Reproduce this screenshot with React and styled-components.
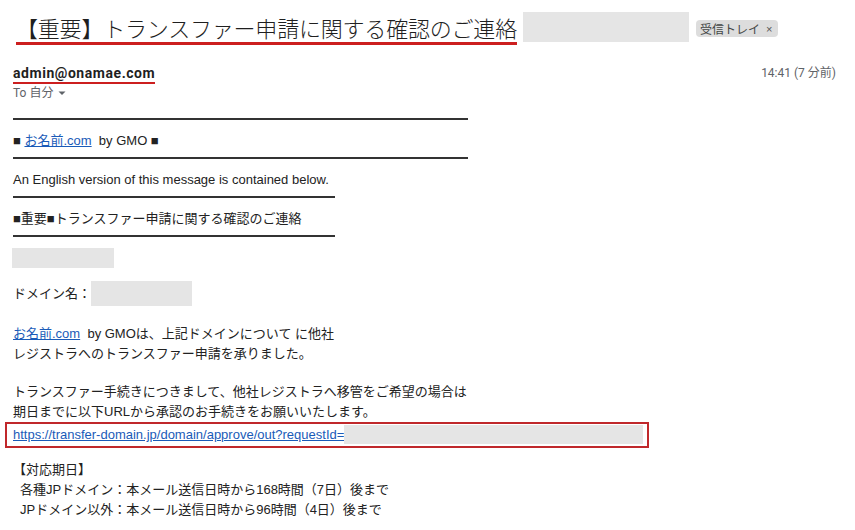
import styled, { createGlobalStyle } from "styled-components"

const GlobalStyle = createGlobalStyle`
  html, body {
    margin: 0;
    padding: 0;
    background: #ffffff;
  }
  body {
    font-family: "Liberation Sans", "Noto Sans CJK JP", sans-serif;
    color: #222222;
  }
`

const StyledPage = styled('div')`
  width: 855px;
  height: 530px;
  overflow: hidden;
  box-sizing: border-box;
  padding: 12px 19px 0 13px;
`

const StyledSubjectRow = styled('div')`
  display: flex;
  flex-direction: row;
  align-items: flex-start;
`

const StyledSubject = styled('h1')`
  margin: 0 0 0 3px;
  font-family: "Noto Sans CJK JP", "Noto Sans", sans-serif;
  font-size: 22px;
  font-weight: 300;
  line-height: 30px;
  letter-spacing: -0.2px;
  color: #1f1f1f;
  white-space: nowrap;
  border-bottom: 3px solid #cc1f1f;
`

const StyledMask = styled('div')`
  width: ${props => props.width};
  height: ${props => props.height};
  flex: ${props => props.flex || 'none'};
  margin-left: ${props => props.marginLeft || '0'};
  background-color: #e5e5e5;
`

const StyledLabel = styled('span')`
  display: inline-flex;
  align-items: center;
  gap: 6px;
  height: 17px;
  margin-left: 7px;
  margin-top: 8px;
  padding: 0 6px 0 4px;
  font-family: "Noto Sans CJK JP", sans-serif;
  font-size: 12px;
  color: #444746;
  background-color: #dddddd;
  border-radius: 4px;
`

const StyledClose = styled('span')`
  font-family: "Liberation Sans", sans-serif;
  font-size: 11px;
  color: #555;
`

const StyledSenderRow = styled('div')`
  display: flex;
  justify-content: space-between;
  align-items: flex-start;
  margin-top: 19px;
`

const StyledSenderCol = styled('div')`
  display: flex;
  flex-direction: column;
  align-items: flex-start;
`

const StyledSender = styled('span')`
  font-family: Roboto, "Liberation Sans", sans-serif;
  font-size: 14px;
  font-weight: 700;
  line-height: 18px;
  letter-spacing: 0.55px;
  color: #1f1f1f;
  border-bottom: 2px solid #cc1f1f;
`

const StyledTo = styled('span')`
  display: flex;
  align-items: center;
  gap: 4px;
  margin-top: 2px;
  font-family: Roboto, "Noto Sans CJK JP", sans-serif;
  font-size: 12px;
  line-height: 14px;
  color: #5f6368;
`

const StyledTime = styled('span')`
  font-family: Roboto, "Noto Sans CJK JP", sans-serif;
  font-size: 12px;
  line-height: 18px;
  color: #5f6368;
`

const StyledBody = styled('div')`
  padding-top: 12px;
  font-size: 13px;
  line-height: 20px;
  color: #222222;
`

const StyledRule = styled('div')`
  width: ${props => props.width};
  height: 2px;
  margin-top: 6px;
  margin-bottom: 11px;
  background-color: #333333;
`

const StyledLine = styled('div')`
  display: flex;
  align-items: center;
  white-space: pre;
  padding-left: ${props => props.indent || '0'};
`

const StyledGap = styled('div')`
  height: ${props => props.height};
`

const StyledLink = styled('a')`
  color: #1a5bb8;
  text-decoration: underline;
`

const StyledUrlBox = styled('div')`
  display: flex;
  align-items: center;
  width: 644px;
  box-sizing: border-box;
  margin-left: -8px;
  padding: 1px 4px 2px 6px;
  border: 2px solid #c0282b;
  line-height: 19px;
`

function Caret() {
  return (
    <svg width="10" height="10" viewBox="0 0 10 10">
      <path d="M1.5 3.5 L8.5 3.5 L5 7 Z" fill="#5f6368" />
    </svg>
  )
}

export default function App() {
  return (
    <StyledPage>
      <GlobalStyle />
      <StyledSubjectRow>
        <StyledSubject>【重要】トランスファー申請に関する確認のご連絡</StyledSubject>
        <StyledMask width="166px" height="30px" marginLeft="6px" />
        <StyledLabel>
          受信トレイ
          <StyledClose>×</StyledClose>
        </StyledLabel>
      </StyledSubjectRow>

      <StyledSenderRow>
        <StyledSenderCol>
          <StyledSender>admin@onamae.com</StyledSender>
          <StyledTo>To 自分 <Caret /></StyledTo>
        </StyledSenderCol>
        <StyledTime>14:41 (7 分前)</StyledTime>
      </StyledSenderRow>

      <StyledBody>
        <StyledRule width="455px" />
        <StyledLine>■ <StyledLink href="#">お名前.com</StyledLink>  by GMO ■</StyledLine>
        <StyledRule width="455px" />
        <StyledLine>An English version of this message is contained below.</StyledLine>
        <StyledRule width="322px" />
        <StyledLine>■重要■トランスファー申請に関する確認のご連絡</StyledLine>
        <StyledRule width="322px" />
        <StyledMask width="102px" height="20px" style={{ marginLeft: '-1px' }} />
        <StyledGap height="13px" />
        <StyledLine>
          ドメイン名：
          <StyledMask width="101px" height="25px" />
        </StyledLine>
        <StyledGap height="18px" />
        <StyledLine><StyledLink href="#">お名前.com</StyledLink>  by GMOは、上記ドメインについて に他社</StyledLine>
        <StyledLine>レジストラへのトランスファー申請を承りました。</StyledLine>
        <StyledGap height="18px" />
        <StyledLine>トランスファー手続きにつきまして、他社レジストラへ移管をご希望の場合は</StyledLine>
        <StyledLine>期日までに以下URLから承認のお手続きをお願いいたします。</StyledLine>
        <StyledUrlBox>
          <StyledLink href="#">https://transfer-domain.jp/domain/approve/out?requestId=</StyledLink>
          <StyledMask flex="1" height="19px" />
        </StyledUrlBox>
        <StyledGap height="12px" />
        <StyledLine>【対応期日】</StyledLine>
        <StyledLine indent="7px">各種JPドメイン：本メール送信日時から168時間（7日）後まで</StyledLine>
        <StyledLine indent="7px">JPドメイン以外：本メール送信日時から96時間（4日）後まで</StyledLine>
      </StyledBody>
    </StyledPage>
  )
}
